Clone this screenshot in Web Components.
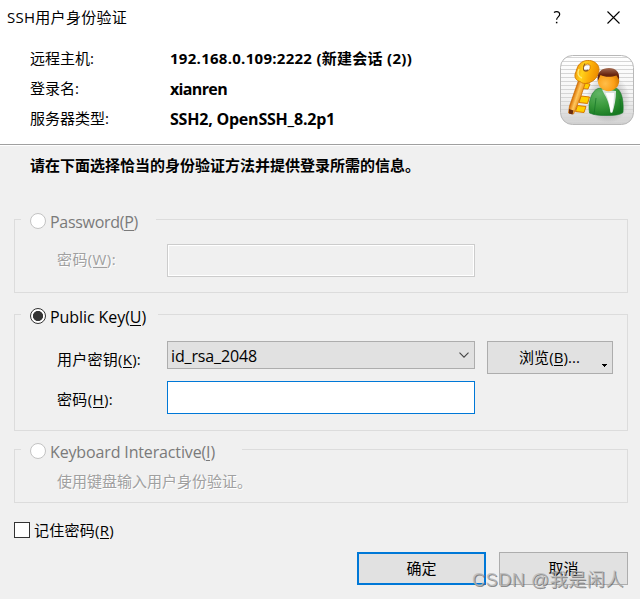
<!DOCTYPE html>
<html lang="zh-CN">
<head>
<meta charset="utf-8">
<title>SSH用户身份验证</title>
<style>
html,body{margin:0;padding:0;width:640px;height:599px;overflow:hidden;background:#f0f0f0}
body{font:15px/20px "Open Sans","Noto Sans CJK SC",sans-serif;color:#000}
</style>
</head>
<body>
<auth-dialog></auth-dialog>
<script>
const define = (name, html, setup) => {
  const t = document.createElement('template');
  t.innerHTML = html;
  customElements.define(name, class extends HTMLElement {
    connectedCallback() {
      if (this.shadowRoot) return;
      this.attachShadow({mode:'open'}).append(t.content.cloneNode(true));
      if (setup) setup.call(this);
    }
  });
};

// Label whose tracking is adjusted so that the text spans the given width.
define('ui-text', `<style>
:host{display:block;flex:none;white-space:nowrap;line-height:20px;height:20px}
:host([bold]){font-weight:700}
:host([latin]){font-size:16px;line-height:22px}
:host([etched]){color:#a0a0a0;text-shadow:1px 1px #fff}
span{display:inline-block}
::slotted(u){text-decoration:none;border-bottom:1px solid currentColor;display:inline-block;line-height:16px;height:16px}
</style><span><slot></slot></span>`, function () {
  const target = Number(this.getAttribute('width'));
  if (!target) return;
  const s = this.shadowRoot.querySelector('span');
  const n = this.textContent.length;
  s.style.letterSpacing = ((target - s.getBoundingClientRect().width) / n) + 'px';
  this.style.width = target + 'px';
});

define('title-bar', `<style>
:host{display:flex;height:33px;align-items:center;padding:1px 20px 0 7px;box-sizing:border-box}
.help{margin-left:auto;margin-right:46px}
svg{display:block}
</style><slot></slot>
<svg class="help" width="8" height="13" viewBox="0 0 8 13"><path d="M1 1.5Q2 .7 3.7.7 6.7.7 6.7 3.3C6.7 5.7 3.6 6 3.6 8.8" fill="none" stroke="#000" stroke-width="1.2"/><rect x="2.9" y="10.8" width="1.5" height="1.5"/></svg>
<svg width="13" height="13" viewBox="0 0 13 13"><path d="M.5.5l12 12M12.5.5l-12 12" stroke="#000" stroke-width="1.1"/></svg>`);

define('info-row', `<style>
:host{display:grid;grid-template-columns:140px 1fr;height:30px;align-items:center}
</style><slot></slot>`);

define('key-user-icon', `<style>:host{display:block;width:74px;height:70px}svg{display:block}</style>
<svg width="74" height="70" viewBox="0 0 74 70">
<defs>
<linearGradient id="bg" x2="0" y2="1"><stop offset="0" stop-color="#fff"/><stop offset=".6" stop-color="#f4f4f4"/><stop offset="1" stop-color="#cfcfcf"/></linearGradient>
<pattern id="ln" width="4" height="4" patternUnits="userSpaceOnUse"><rect width="4" height="1" y="2" fill="#d6d6d6"/></pattern>
<linearGradient id="gold" x1="0" x2="1" y2=".25"><stop offset="0" stop-color="#f08400"/><stop offset=".4" stop-color="#ffd21c"/><stop offset=".7" stop-color="#fcae08"/><stop offset="1" stop-color="#ee9000"/></linearGradient>
<linearGradient id="shaft" gradientUnits="userSpaceOnUse" x1="14" y1="38" x2="23" y2="41"><stop offset="0" stop-color="#d86e00"/><stop offset=".4" stop-color="#ffc65c"/><stop offset="1" stop-color="#e88000"/></linearGradient>
<radialGradient id="face" cx=".35" cy=".65" r=".7"><stop offset="0" stop-color="#ffbe4a"/><stop offset=".6" stop-color="#fb9f16"/><stop offset="1" stop-color="#cf7500"/></radialGradient>
<linearGradient id="hair" x2="0" y2="1"><stop offset="0" stop-color="#a46a50"/><stop offset=".5" stop-color="#6b2812"/><stop offset="1" stop-color="#4a1304"/></linearGradient>
<radialGradient id="coat" cx=".3" cy=".2" r=".85"><stop offset="0" stop-color="#62b566"/><stop offset=".55" stop-color="#3a9a3c"/><stop offset="1" stop-color="#187a22"/></radialGradient>
<radialGradient id="glow"><stop offset=".5" stop-color="#888" stop-opacity=".5"/><stop offset="1" stop-color="#888" stop-opacity="0"/></radialGradient>
</defs>
<rect x=".5" y=".5" width="73" height="69" rx="12" fill="url(#bg)"/>
<rect x="1" y="1" width="72" height="68" rx="11" fill="url(#ln)"/>
<rect x=".5" y=".5" width="73" height="69" rx="12" fill="none" stroke="#b8b8b8"/>
<ellipse cx="48" cy="44" rx="22" ry="24" fill="url(#glow)"/>
<path d="M21 41l8.500 1-2 6.500-8.500-1zM17.500 50.500l8.500 1-2 6-8.500-1zM23 28l7 1-2 5-6-.5z" fill="#ffd000" stroke="#d87800" stroke-width="1"/>
<path fill="url(#shaft)" stroke="#c76900" stroke-width=".7" d="M19 24l7 2-5 15-7.500 18-5-1 1-7z"/>
<path d="M9 54l4.500 1.500-1 4-3.500-1z" fill="#6b2b0c"/>
<path fill="url(#gold)" stroke="#d17800" stroke-width=".9" fill-rule="evenodd" d="M29.500 5.500c6 .5 10 5 9.500 10-.5 6-5 11-11 12.500-3 1-6 .5-8-1.500-4-1-5.500-4-5-7 .5-2 1.500-4 2-6 1.500-5 6-8.500 12.500-8zM28 9c-3 0-5 3-4.500 5.500 1 3 6 1.500 6.500-1 .6-2.500 0-4-2-4.500z"/>
<path d="M25 8.500c-1.500 2-2 4-1.500 6 .5 1.500 3 2 4.500.5" stroke="#8b5a20" stroke-width="1.100" fill="none"/>
<path d="M19 14c-2 4-1 8 3 9" stroke="#ffea72" stroke-width="1.400" fill="none"/>
<path fill="url(#coat)" stroke="#16772a" stroke-width=".6" d="M29.500 58C27.500 47 32 35.500 38 33.500l5-.5h12c6 .5 9 11.500 8 24.500-3 2.500-9 3-17 3-7 0-12-.5-16.500-2.500z"/>
<path fill="#d9e3df" d="M42 34.500l14 1.500c0 8-1.500 15-3.500 21.500l-2 0C49.500 50 47 43 44.500 39.500z"/>
<path fill="#fff" d="M45.500 38l8.500 0c0 7-.8 13-2 19.500l-1.300 0C50 50 48 43 45.500 38z"/>
<path d="M36 43l-2 16.500M60 44l1 14" stroke="#147326" stroke-width=".7"/>
<circle cx="48.500" cy="25.500" r="10.700" fill="url(#face)"/>
<path fill="url(#hair)" d="M37.800 26C36.500 16.500 42 13 49 13c7 0 11 4 10 11.500l-2.500-4C51 22.500 44 22 40.500 20z"/>
</svg>`);

define('radio-dot', `<style>
:host{display:block;flex:none;box-sizing:border-box;width:16px;height:16px;border:1px solid #c3c3c3;border-radius:50%;background:#fff}
:host([checked]){border-color:#333;background:radial-gradient(circle,#333 4.7px,#fff 5.4px)}
</style>`);

// Framed group with a legend that interrupts the top edge.
define('option-group', `<style>
:host{display:flow-root;box-sizing:border-box;border:1px solid #dcdcdc;height:var(--h);margin:0 12px var(--gap,21px) 14px}
header{display:flex;align-items:center;gap:4px;box-sizing:border-box;width:var(--legend);height:24px;margin:-11px 0 0 6px;padding-left:9px;background:#f0f0f0;color:var(--ink,#000)}
</style><header><radio-dot></radio-dot><slot name="legend"></slot></header><slot></slot>`, function () {
  if (this.hasAttribute('checked')) this.shadowRoot.querySelector('radio-dot').setAttribute('checked', '');
});

define('form-row', `<style>
:host{display:grid;grid-template-columns:110px 308px 138px;height:var(--rh,33px);align-items:center;margin:var(--mt,0) 0 0 42px}
::slotted(push-button){margin-left:12px}
</style><slot></slot>`);

define('text-box', `<style>
:host{display:block;box-sizing:border-box;height:33px;border:1px solid #0078d7;background:#fff}
:host([disabled]){border-color:#ccc;background:#f0f0f0;box-shadow:inset 0 0 0 1px #fff}
</style>`);

define('select-box', `<style>
:host{display:flex;box-sizing:border-box;height:28px;border:1px solid #adadad;background:#e1e1e1;align-items:center;justify-content:space-between;padding:0 5px 0 3px}
</style><slot></slot><svg width="10" height="6" viewBox="0 0 10 6"><path d="M.5.7L5 5.2 9.5.7" fill="none" stroke="#444" stroke-width="1.1"/></svg>`);

define('push-button', `<style>
:host{position:relative;display:flex;box-sizing:border-box;width:var(--w,129px);height:33px;border:1px solid #adadad;background:#e1e1e1;align-items:center;justify-content:center;padding-bottom:2px}
:host([default]){border:2px solid #0078d7}
svg{display:none;position:absolute;right:5px;bottom:6px}
:host([menu]){padding:0 1px 1px 0}
:host([menu]) svg{display:block}
</style><slot></slot><svg width="5" height="3" shape-rendering="crispEdges"><path d="M0 0h5v1h-1v1h-1v1h-1v-1h-1v-1h-1z"/></svg>`);

define('check-box', `<style>
:host{display:flex;align-items:center;gap:4px;height:20px}
i{box-sizing:border-box;width:16px;height:16px;border:1px solid #333;background:#fff}
</style><i></i><slot></slot>`);

define('water-mark', `<style>
:host{position:absolute;right:16px;bottom:9px;font:18px/20px "Liberation Sans","Noto Sans CJK SC",sans-serif;color:rgba(185,185,185,.8);text-shadow:1px 1px rgba(80,80,80,.65)}
</style><slot></slot>`);

define('auth-dialog', `<style>
:host{position:relative;display:flex;flex-direction:column;width:640px;height:599px;background:#f0f0f0}
.top{height:144px;background:#fff;border-bottom:1px solid #a0a0a0;box-shadow:0 1px #fff;box-sizing:content-box}
.info{display:grid;grid-template-columns:530px 74px;padding:10px 6px 0 30px}
key-user-icon{margin-top:12px}
.prompt{padding:10px 30px 0;height:63px;box-sizing:border-box}
.groups{padding-top:11px}
.desc{padding:8px 0 0 42px}
.remember{padding:0 14px}
.actions{display:flex;justify-content:flex-end;gap:13px;padding:12px 12px 0}
</style>
<div class="top">
<title-bar><ui-text width="120">SSH用户身份验证</ui-text></title-bar>
<div class="info"><div>
<info-row><ui-text width="64">远程主机:</ui-text><ui-text bold width="242">192.168.0.109:2222 (新建会话 (2))</ui-text></info-row>
<info-row><ui-text width="49">登录名:</ui-text><ui-text bold latin width="57">xianren</ui-text></info-row>
<info-row><ui-text width="79">服务器类型:</ui-text><ui-text bold latin width="165">SSH2, OpenSSH_8.2p1</ui-text></info-row>
</div><key-user-icon></key-user-icon></div>
</div>
<div class="prompt"><ui-text bold width="390">请在下面选择恰当的身份验证方法并提供登录所需的信息。</ui-text></div>
<div class="groups">
<option-group style="--h:74px;--legend:135px;--ink:#7a7a7a">
<ui-text latin slot="legend" width="88">Password(<u>P</u>)</ui-text>
<form-row style="--mt:11px"><ui-text etched width="59" style="margin-bottom:4px">密码(<u>W</u>):</ui-text><text-box disabled></text-box></form-row>
</option-group>
<option-group checked style="--h:117px;--legend:137px;--gap:18px">
<ui-text latin slot="legend" width="96">Public Key(<u>U</u>)</ui-text>
<form-row style="--mt:12px;--rh:34px"><ui-text width="84" style="margin-top:3px">用户密钥(<u>K</u>):</ui-text><select-box style="margin-bottom:4px"><ui-text latin width="86">id_rsa_2048</ui-text></select-box><push-button menu style="--w:126px;align-self:end"><ui-text width="61">浏览(<u>B</u>)...</ui-text></push-button></form-row>
<form-row style="--mt:7px"><ui-text width="56" style="margin-top:2px">密码(<u>H</u>):</ui-text><text-box></text-box></form-row>
</option-group>
<option-group style="--h:54px;--legend:221px;--ink:#7a7a7a;--gap:17px">
<ui-text latin slot="legend" width="165">Keyboard Interactive(<u>I</u>)</ui-text>
<div class="desc"><ui-text etched width="195">使用键盘输入用户身份验证。</ui-text></div>
</option-group>
</div>
<div class="remember"><check-box><ui-text width="80">记住密码(<u>R</u>)</ui-text></check-box></div>
<div class="actions"><push-button default><ui-text width="30">确定</ui-text></push-button><push-button><ui-text width="30">取消</ui-text></push-button></div>
<water-mark><ui-text width="152">CSDN @我是闲人</ui-text></water-mark>`);
</script>
</body>
</html>
